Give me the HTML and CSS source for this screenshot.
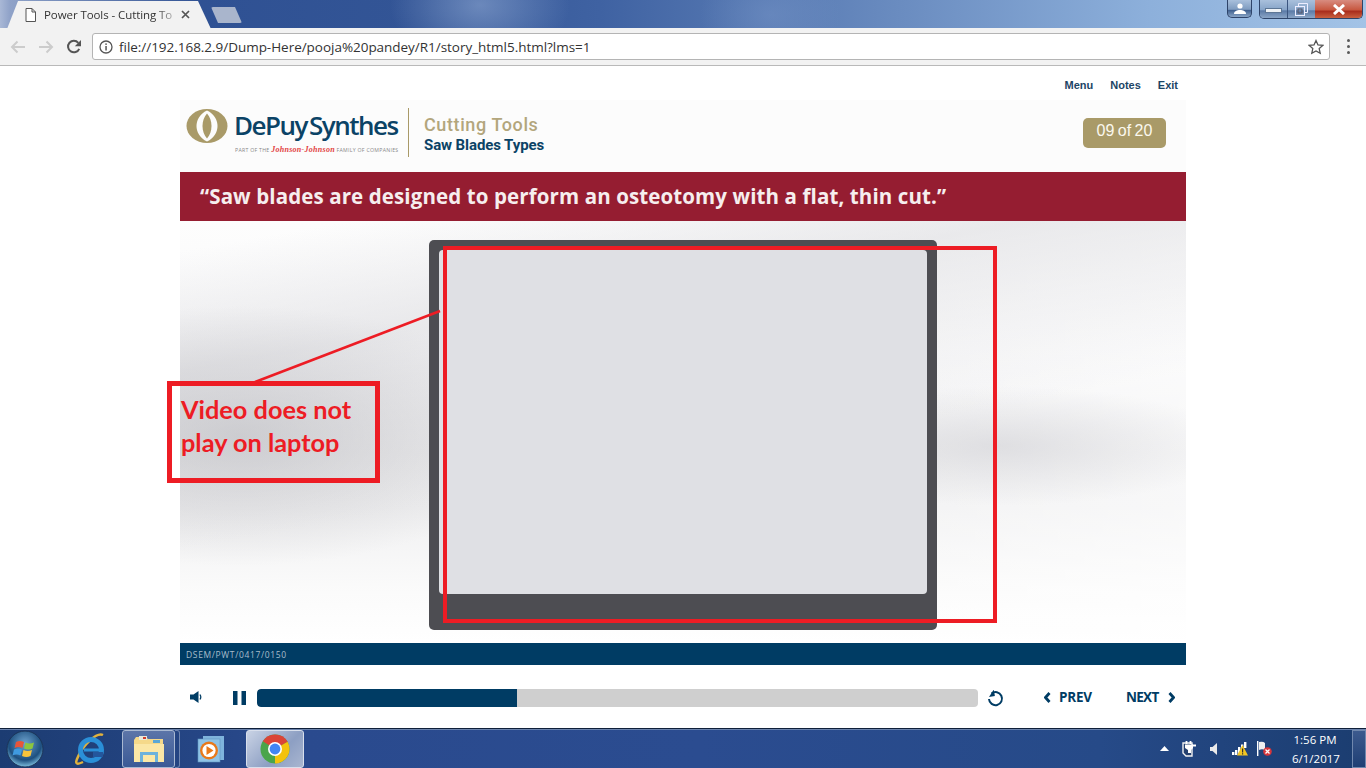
FILE: index.html
```html
<!DOCTYPE html>
<html lang="en">
<head>
<meta charset="utf-8">
<title>Power Tools - Cutting Tools</title>
<link rel="stylesheet" href="styles.css">
</head>
<body>
<div class="screen">
  <header class="tabstrip">
    <div class="tab">
      <svg class="tab-doc" width="11" height="14" viewBox="0 0 11 14"><path d="M1 .5h6l3.500 3.500v9.500h-9.500zM7 .5v3.500h3.500" fill="#fff" stroke="#555" stroke-width="1"/></svg>
      <span class="tab-title">Power Tools - Cutting To</span>
      <svg class="tab-x" width="9" height="9" viewBox="0 0 9 9"><path d="M1 1l7 7M8 1l-7 7" stroke="#555" stroke-width="1.700"/></svg>
    </div>
    <div class="newtab"></div>
    <div class="winctl">
      <div class="winbtn user"><svg width="14" height="12" viewBox="0 0 14 12"><circle cx="7" cy="3" r="2.600" fill="#fff"/><path d="M1 11c0-3 3-4 6-4s6 1 6 4z" fill="#fff"/></svg></div>
      <div class="wingroup">
        <div class="winbtn min"><span class="min-bar"></span></div>
        <div class="winbtn max"><svg width="13" height="13" viewBox="0 0 13 13"><path d="M3.500 3V.5h9v9H10" fill="none" stroke="#eef" /><rect x=".5" y="3.500" width="9" height="9" fill="none" stroke="#eef"/><rect x="3" y="6" width="4" height="4" fill="none" stroke="#556"/></svg></div>
        <div class="winbtn close"><svg width="16" height="11" viewBox="0 0 16 11"><path d="M3 1l10 9M13 1l-10 9" stroke="#fff" stroke-width="3"/></svg></div>
      </div>
    </div>
  </header>

  <nav class="toolbar">
    <svg class="nav-ico first" width="16" height="14" viewBox="0 0 16 14"><path d="M15 7H2M7.500 1.500L2 7l5.500 5.500" fill="none" stroke="#ccc" stroke-width="2"/></svg>
    <svg class="nav-ico" width="16" height="14" viewBox="0 0 16 14"><path d="M1 7h13M8.500 1.500L14 7l-5.500 5.500" fill="none" stroke="#ccc" stroke-width="2"/></svg>
    <svg class="nav-ico" width="16" height="16" viewBox="0 0 16 16"><path d="M13.200 9.800A5.800 5.800 0 1 1 12.300 3.800" fill="none" stroke="#555" stroke-width="2"/><path d="M15 1v6.200H8.800z" fill="#555"/></svg>
    <div class="omnibox">
      <svg class="info" width="14" height="14" viewBox="0 0 14 14"><circle cx="7" cy="7" r="6" fill="none" stroke="#555" stroke-width="1.300"/><rect x="6.300" y="6" width="1.500" height="4.500" fill="#555"/><rect x="6.300" y="3.400" width="1.500" height="1.500" fill="#555"/></svg>
      <span class="url">file://192.168.2.9/Dump-Here/pooja%20pandey/R1/story_html5.html?lms=1</span>
      <svg class="star" width="16" height="16" viewBox="0 0 16 16"><path d="M8 1.500l2 4.400 4.800.5-3.600 3.200 1 4.700L8 11.900l-4.200 2.400 1-4.700L1.200 6.400 6 5.900z" fill="none" stroke="#555" stroke-width="1.300"/></svg>
    </div>
    <div class="kebab"><i></i><i></i><i></i></div>
  </nav>

  <main class="page">
    <div class="player">
      <div class="toplinks"><span>Menu</span><span>Notes</span><span>Exit</span></div>
      <div class="slide-head">
        <div class="logo">
          <svg class="logo-mark" width="42" height="36" viewBox="0 0 42 36"><ellipse cx="21" cy="18" rx="20.500" ry="17" fill="#a99a68"/><path d="M21 2.500C7 9 7 27 21 33.500 35 27 35 9 21 2.500z" fill="#fcfcfc"/><path d="M21 5.500C15 12 15 24 21 30.500 27 24 27 12 21 5.500z" fill="#a99a68"/></svg>
          <div class="logo-text">
            <div class="logo-name">DePuy<span class="logo-gap">Synthes</span></div>
            <div class="logo-sub">PART OF THE <b>Johnson-Johnson</b> FAMILY OF COMPANIES</div>
          </div>
        </div>
        <div class="head-titles">
          <div class="head-t1">Cutting Tools</div>
          <div class="head-t2">Saw Blades Types</div>
        </div>
        <div class="counter">09 of 20</div>
      </div>
      <div class="quote">“Saw blades are designed to perform an osteotomy with a flat, thin cut.”</div>
      <div class="stage">
        <div class="video"><div class="video-screen"></div></div>
      </div>
      <div class="codebar">DSEM/PWT/0417/0150</div>
      <div class="controls">
        <svg class="c-sound" width="14" height="14" viewBox="0 0 14 14"><path d="M0 4.500h3.500L8.500 1v12L3.500 9.500H0z" fill="#003c64"/><path d="M10 4.500c1 1.500 1 3.500 0 5" fill="none" stroke="#003c64" stroke-width="1.200"/></svg>
        <svg class="c-pause" width="13" height="14" viewBox="0 0 13 14"><rect width="4.500" height="14" fill="#003c64"/><rect x="8.500" width="4.500" height="14" fill="#003c64"/></svg>
        <div class="track"><div class="fill" style="width:36%"></div></div>
        <svg class="c-replay" width="17" height="17" viewBox="0 0 17 17"><path d="M4.500 3.500A6.500 6.500 0 1 1 2 9" fill="none" stroke="#003c64" stroke-width="2"/><path d="M7.500 0v6.500H1.500z" fill="#003c64" transform="rotate(-10 5 4)"/></svg>
        <div class="nav-btn prev"><svg width="7" height="11" viewBox="0 0 7 11"><path d="M5.500 1L1.500 5.500l4 4.500" fill="none" stroke="#003c64" stroke-width="2.800"/></svg><span>PREV</span></div>
        <div class="nav-btn next"><span>NEXT</span><svg width="7" height="11" viewBox="0 0 7 11"><path d="M1.500 1l4 4.500-4 4.500" fill="none" stroke="#003c64" stroke-width="2.800"/></svg></div>
      </div>
    </div>

    <div class="mark mark-video"></div>
    <svg class="mark-line" width="200" height="80" viewBox="0 0 200 80"><path d="M195 2L10 73" stroke="#ed1c24" stroke-width="2.500"/></svg>
    <div class="mark mark-note">Video does not<br>play on laptop</div>
  </main>

  <footer class="taskbar">
    <svg class="orb" width="38" height="38" viewBox="0 0 38 38">
      <defs><radialGradient id="orbg" cx="50%" cy="35%" r="65%"><stop offset="0" stop-color="#6fa4cf"/><stop offset=".7" stop-color="#1d4f7f"/><stop offset="1" stop-color="#7fc0e0"/></radialGradient></defs>
      <circle cx="19" cy="19" r="18" fill="url(#orbg)" stroke="#1b3458"/>
      <path d="M10 12q4-2 8 0l-1.500 6q-4-2-8 0z" fill="#e8553a"/><path d="M19.500 12.500q4 2 8.500 0l-1.500 6q-4 2-8.500 0z" fill="#8cc63f"/><path d="M8 19.500q4-2 8 0l-1.500 6q-4-2-8 0z" fill="#3f9ae0"/><path d="M17.500 20q4 2 8.500 0l-1.500 6q-4 2-8.500 0z" fill="#f8c33a"/>
    </svg>
    <svg class="ie" width="34" height="34" viewBox="0 0 34 34"><path d="M30 3C24 0 10 12 4 27c-2 5 0 6 6 3" fill="none" stroke="#e2b23c" stroke-width="2.500"/><circle cx="18" cy="18" r="10.500" fill="none" stroke="#2a8fd8" stroke-width="5"/><rect x="11" y="16.500" width="15" height="3" fill="#2a8fd8"/><rect x="20" y="20" width="10" height="5" fill="#24569c"/></svg>
    <div class="task-btn folder-btn">
      <svg width="32" height="28" viewBox="0 0 32 28"><path d="M1 5l2-3h10l2 2h15v6H1z" fill="#f5d98a"/><rect x="6" y="1" width="8" height="4" fill="#e8e8d8"/><rect x="10" y="2" width="3" height="2" fill="#d23c2c"/><rect x="20" y="5" width="7" height="3" fill="#5aa7d6"/><path d="M1 9h30v18H1z" fill="#fbe7a6"/><path d="M7 27V17h18v10h-3v-7H10v7z" fill="#6cb2dc"/></svg>
    </div>
    <div class="task-sep"></div>
    <svg class="wmp" width="28" height="28" viewBox="0 0 28 28"><rect x="6" y="1" width="21" height="24" fill="#7fb4dc"/><rect x="1" y="4" width="22" height="23" fill="#8fc3e6" stroke="#5f95c0" stroke-width=".6"/><circle cx="12" cy="15.500" r="9" fill="#e9791a"/><circle cx="12" cy="15.500" r="6.600" fill="#fff"/><path d="M9.500 11l7 4.500-7 4.500z" fill="#e9791a"/></svg>
    <div class="task-btn chrome-btn">
      <svg width="30" height="30" viewBox="0 0 30 30"><circle cx="15" cy="15" r="14.500" fill="#4aa54a"/><path d="M15 .5A14.500 14.500 0 0 1 27.600 7.800L15 15 2.800 7.200A14.500 14.500 0 0 1 15 .5z" fill="#db4437"/><path d="M27.600 7.800A14.500 14.500 0 0 1 15 29.500L15 15z" fill="#f4c20d"/><circle cx="15" cy="15" r="7" fill="#fff"/><circle cx="15" cy="15" r="5.400" fill="#4285f4"/></svg>
    </div>
    <div class="tray">
      <svg class="tray-arrow" width="9" height="5" viewBox="0 0 9 5"><path d="M0 5l4.500-5L9 5z" fill="#fff"/></svg>
      <svg class="tray-ico power" width="14" height="16" viewBox="0 0 14 16"><path d="M1 2h9v13H4l-3-3z" fill="#24406f" stroke="#f2f2f2" stroke-width="1.400"/><path d="M4.500 0v3M8.500 0v3" stroke="#fff" stroke-width="1.800"/><path d="M3 3.500h8v3.500l-2 2v3H6V9L3 7z" fill="#fff"/><path d="M10 4.500h4" stroke="#fff" stroke-width="2"/></svg>
      <svg class="tray-ico sound" width="8" height="14" viewBox="0 0 8 14"><path d="M0 5h2.500L7 1v12L2.500 9H0z" fill="#eaeaea"/></svg>
      <svg class="tray-ico net" width="16" height="14" viewBox="0 0 16 14"><rect x="0" y="10" width="2.400" height="3" fill="#fff"/><rect x="3" y="8" width="2.400" height="5" fill="#fff"/><rect x="6" y="5" width="2.400" height="8" fill="#fff"/><rect x="9" y="2.500" width="2.400" height="5" fill="#fff"/><rect x="12" y="0" width="2.400" height="6" fill="#fff"/><path d="M10.500 3l5.500 10.500H5z" fill="#f3c623"/><rect x="10" y="6.500" width="1.200" height="4" fill="#333"/><rect x="10" y="11.200" width="1.200" height="1.300" fill="#333"/></svg>
      <svg class="tray-ico flag" width="15" height="16" viewBox="0 0 15 16"><rect x="0" y="0" width="1.400" height="15" fill="#fff"/><path d="M2 1q4-1 6 1v7q-3-1.500-6 0z" fill="#f0f0f0"/><circle cx="10.500" cy="10.500" r="4.300" fill="#d9353a"/><path d="M8.500 8.500l4 4M12.500 8.500l-4 4" stroke="#fff" stroke-width="1.300"/></svg>
      <div class="clock"><div>1:56 PM</div><div>6/1/2017</div></div>
      <div class="show-desktop"></div>
    </div>
  </footer>
</div>
</body>
</html>
```
FILE: styles.css
```css
* { box-sizing: border-box; }
html, body { margin: 0; padding: 0; }
body { background: #fff; }
.screen { width: 1366px; height: 768px; display: flex; flex-direction: column; overflow: hidden; font-family: "Open Sans", sans-serif; }

/* window title strip */
.tabstrip { height: 28px; flex: none; display: flex; align-items: flex-start; padding-left: 7px;
  background:
    radial-gradient(ellipse 90px 60px at 480px 5px, rgba(150,175,215,.55), transparent),
    radial-gradient(ellipse 70px 50px at 770px 15px, rgba(120,150,200,.45), transparent),
    linear-gradient(90deg, #a9b8d6 0, #8fa2c8 10px, #2f5193 200px, #335596 420px, #3f62a2 600px, #6a8cc0 900px, #8db0db 1150px, #a3c3e6 1366px); }
.tab { width: 204px; height: 28px; margin-top: 1px; display: flex; align-items: center; padding-left: 18px; background: #f2f2f2;
  clip-path: polygon(0 100%, 11px 0, 191px 0, 204px 100%); }
.tab-doc { flex: none; margin-right: 8px; margin-top: -1px; }
.tab-title { width: 131px; font-size: 11.500px; line-height: 16px; letter-spacing: -.08px; color: #333; white-space: nowrap; margin-top: -1px;
  -webkit-mask-image: linear-gradient(90deg, #000 85%, rgba(0,0,0,.25)); mask-image: linear-gradient(90deg, #000 85%, rgba(0,0,0,.25)); }
.tab-x { flex: none; margin-left: 6px; margin-top: -1px; }
.newtab { width: 31px; height: 16px; margin: 7px 0 0 0; background: #a9b5cc; border-radius: 2px; clip-path: polygon(0 0, 24px 0, 31px 100%, 7px 100%); }
.winctl { margin-left: auto; margin-right: 3px; display: flex; gap: 7px; }
.winbtn { height: 18px; display: flex; align-items: center; justify-content: center; }
.user { width: 25px; border: 1px solid #2e4469; border-top: 0; border-radius: 0 0 5px 5px; background: linear-gradient(#a9c0dc 0, #7f9cc0 55%, #3e5f8e 60%, #8aa5c6); }
.wingroup { display: flex; border: 1px solid #2e4469; border-top: 0; border-radius: 0 0 5px 5px; overflow: hidden; height: 19px; }
.min { width: 28px; background: linear-gradient(#a9c0dc 0, #87a4c8 55%, #5b7aa6 60%, #8aa5c6); border-right: 1px solid #3b557f; }
.min-bar { width: 17px; height: 5px; margin-top: 3px; background: #eef2f6; border: 1px solid #5d7695; }
.max { width: 27px; background: linear-gradient(#a9c0dc 0, #87a4c8 55%, #5b7aa6 60%, #8aa5c6); }
.close { width: 47px; background: linear-gradient(#d88c80 0, #c7573f 55%, #a82c1c 62%, #c9603f); }

/* browser toolbar */
.toolbar { height: 38px; flex: none; display: flex; align-items: center; background: #f2f2f2; border-bottom: 1px solid #b9b9b9; }
.nav-ico { flex: none; margin-left: 12px; }
.nav-ico.first { margin-left: 10px; }
.omnibox { width: 1238px; height: 27px; margin-left: 10px; display: flex; align-items: center; background: #fff; border: 1px solid #b4b4b4; border-radius: 3px; padding-left: 6px; }
.info { flex: none; }
.url { margin-left: 6px; font-size: 13.500px; letter-spacing: -.03px; color: #333; white-space: nowrap; }
.star { margin-left: auto; margin-right: 5px; flex: none; }
.kebab { margin-left: 17px; display: flex; flex-direction: column; gap: 3px; }
.kebab i { display: block; width: 3px; height: 3px; border-radius: 50%; background: #5a5a5a; }

/* page */
.page { flex: 1; position: relative; background: #fff; display: flex; justify-content: flex-start; padding-left: 180px; }
.player { width: 1006px; display: flex; flex-direction: column; }
.toplinks { height: 34px; flex: none; display: flex; justify-content: flex-end; gap: 17px; padding: 13px 8px 0 0; font: bold 11px/12px "Liberation Sans", sans-serif; color: #1c4566; }
.slide-head { height: 72px; flex: none; display: flex; background: #fcfcfc; position: relative; }
.logo { width: 228px; display: flex; padding: 8px 0 0 6px; }
.logo-mark { flex: none; }
.logo-text { margin-left: 6px; }
.logo-name { font: 600 26px/36px "Open Sans", sans-serif; letter-spacing: -1.500px; color: #0b4366; white-space: nowrap; margin-top: -1px; }
.logo-gap { margin-left: 2px; }
.logo-sub { font-size: 5.200px; line-height: 8px; color: #888; white-space: nowrap; margin: 3px 0 0 1px; letter-spacing: .28px; }
.logo-sub b { font: italic bold 8px/8px "Liberation Serif", serif; color: #e2423f; }
.head-titles { margin-top: 8px; height: 49px; border-left: 1px solid #a99a68; padding: 5px 0 0 15px; }
.head-t1 { font: 500 18px/23px Roboto, sans-serif; letter-spacing: .6px; color: #b3a67c; white-space: nowrap; }
.head-t2 { font: 700 15px/18px Roboto, sans-serif; letter-spacing: -.1px; color: #0b4366; white-space: nowrap; }
.counter { width: 83px; height: 30px; margin: 18px 20px 0 auto; background: #a99a68; border-radius: 5px; font: 16px/25px "Liberation Sans", sans-serif; word-spacing: -1px; color: #fbf8ee; text-align: center; }
.quote { height: 49px; flex: none; background: #951d31; padding-left: 20px; font: 700 20.500px/49px "Open Sans", sans-serif; letter-spacing: .11px; color: #f6eeee; white-space: nowrap; }
.stage { height: 422px; flex: none; display: flex; justify-content: center; padding: 19px 1px 0 0;
  background:
    radial-gradient(ellipse 300px 130px at 60px 215px, rgba(185,185,190,.6), transparent),
    radial-gradient(ellipse 240px 60px at 820px 225px, rgba(205,205,210,.55), transparent),
    linear-gradient(170deg, rgba(225,225,228,0) 5%, rgba(225,225,228,.7) 25%, rgba(255,255,255,0) 55%),
    linear-gradient(90deg, rgba(255,255,255,0) 50%, rgba(255,255,255,.55) 100%),
    linear-gradient(#fdfdfd 0, #f8f8f9 30%, #eeeeef 55%, #f0f0f1 68%, #fbfbfb 88%, #fff 100%); }
.video { width: 508px; height: 390px; background: #4d4d52; border-radius: 5px; padding: 10px 10px 36px; }
.video-screen { height: 344px; background: #dfe0e4; border-radius: 4px; }
.codebar { height: 22px; flex: none; background: #003c64; padding-left: 6px; font-size: 8.500px; line-height: 24px; letter-spacing: .65px; color: #a9bccb; }
.controls { flex: 1; display: flex; align-items: center; padding-top: 1px; }
.c-sound { flex: none; margin-left: 10px; }
.c-pause { flex: none; margin-left: 29px; margin-top: 2px; }
.track { width: 721px; height: 18px; margin-left: 11px; margin-top: 2px; background: #cfcfcf; border-radius: 4px; overflow: hidden; }
.fill { height: 100%; background: #003c64; border-radius: 4px 0 0 4px; }
.c-replay { flex: none; margin-left: 9px; margin-top: 2px; }
.nav-btn { display: flex; align-items: center; font: 700 13.500px/16px "Open Sans", sans-serif; color: #003c64; letter-spacing: -.2px; }
.prev { margin-left: 40px; gap: 8px; }
.next { margin-left: 34px; gap: 9px; letter-spacing: -.7px; }

/* annotations over the page */
.mark { position: absolute; border: 4px solid #ed1c24; }
.mark-video { left: 443px; top: 180px; width: 554px; height: 377px; }
.mark-line { position: absolute; left: 245px; top: 243px; }
.mark-note { left: 167px; top: 315px; width: 213px; height: 102px; border-width: 5px; padding: 7px 0 0 9px; font: 700 25.300px/33px Lato, sans-serif; color: #ed1c24; white-space: nowrap; }

/* taskbar */
.taskbar { height: 40px; flex: none; display: flex; align-items: center; border-top: 1px solid #0f1f3a; box-shadow: inset 0 1px 0 #6b83ad;
  background: linear-gradient(90deg, #1c3c72 0, #2a4a8e 300px, #2b4c90 700px, #264a88 1100px, #1b3d70 1366px); }
.orb { flex: none; margin-left: 6px; }
.ie { flex: none; margin-left: 29px; }
.task-btn { height: 38px; flex: none; display: flex; align-items: center; justify-content: center; border: 1px solid #a9b9d2; border-radius: 3px; }
.folder-btn { width: 53px; margin-left: 15px; background: linear-gradient(#5c75a8, #3b5a96); }
.task-sep { width: 5px; height: 38px; flex: none; border: 1px solid #6f86b0; border-left: 0; border-radius: 0 3px 3px 0; }
.wmp { flex: none; margin-left: 17px; }
.chrome-btn { width: 58px; margin-left: 21px; background: linear-gradient(135deg, #c9d3e5, #8d9fc3 60%, #a9b6d0); border-color: #d8dfec; }
.tray { margin-left: auto; display: flex; align-items: center; height: 100%; }
.tray-arrow { flex: none; margin-right: 13px; }
.tray-ico { flex: none; }
.power { margin-right: 14px; }
.sound { margin-right: 14px; }
.net { margin-right: 9px; }
.clock { margin-left: 20px; width: 46px; font: 11.500px/19px "Open Sans", sans-serif; color: #fff; text-align: center; white-space: nowrap; }
.show-desktop { width: 14px; height: 38px; margin-left: 14px; border: 1px solid #7088ae; background: linear-gradient(#3c5a8e, #1f3f74); }
```
